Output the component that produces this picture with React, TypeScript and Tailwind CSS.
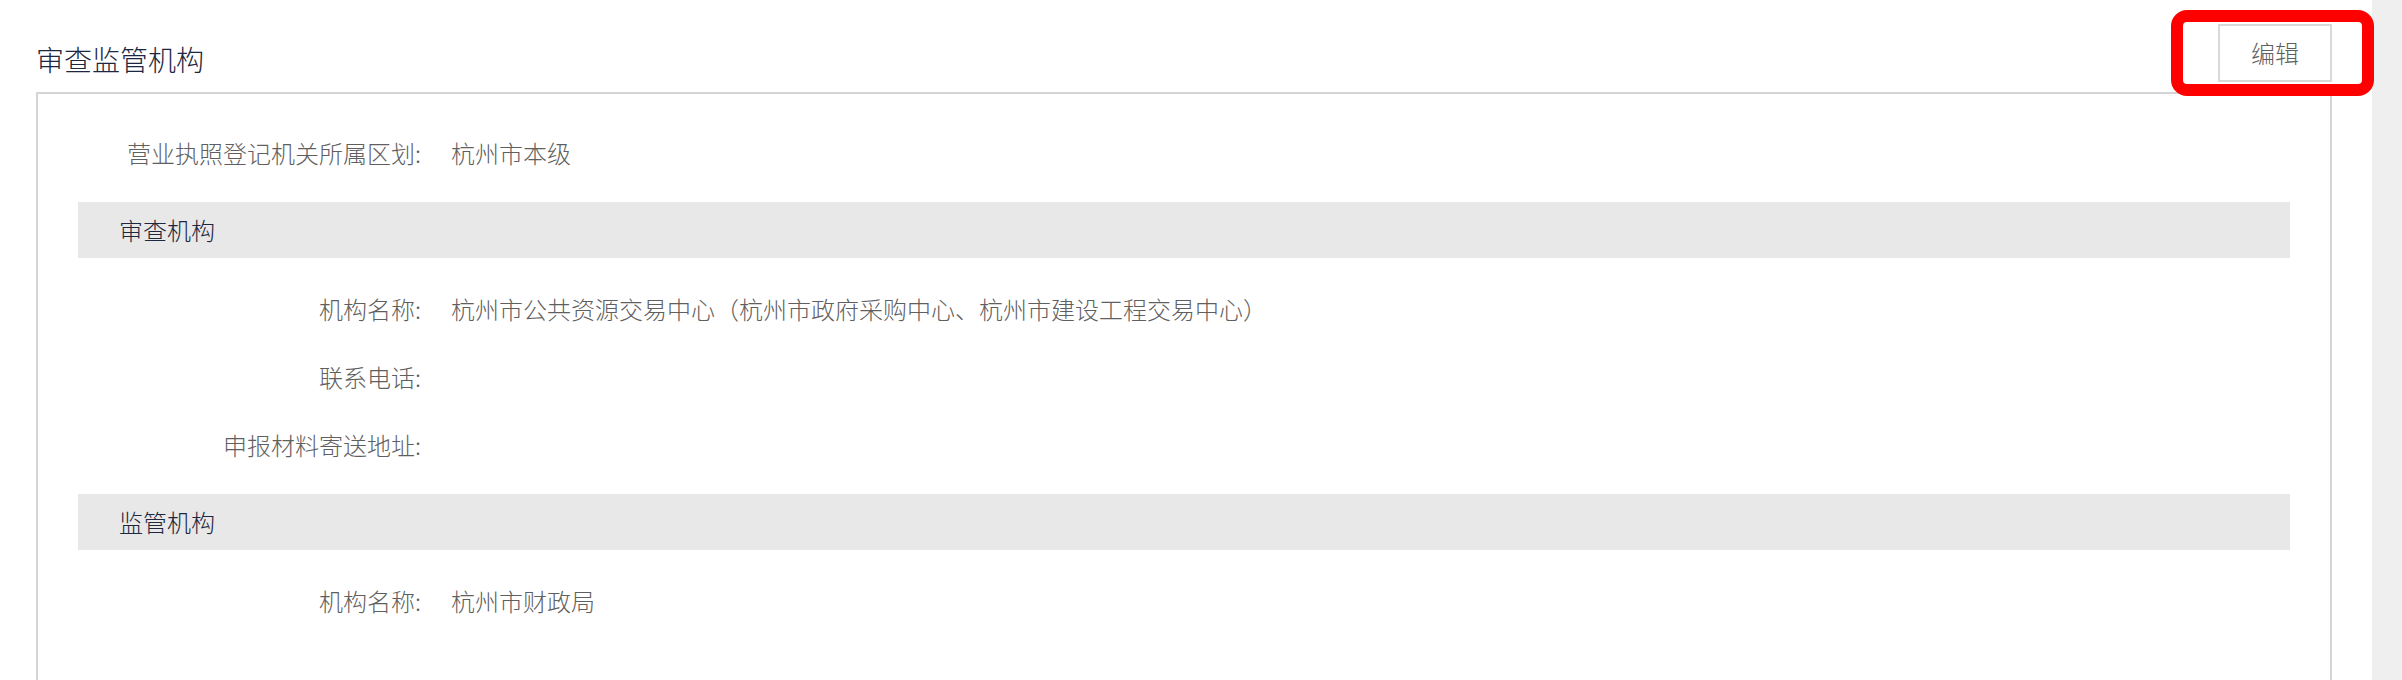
const reviewRows = [
  {
    label: "机构名称:",
    value: "杭州市公共资源交易中心（杭州市政府采购中心、杭州市建设工程交易中心）",
  },
  { label: "联系电话:", value: "" },
  { label: "申报材料寄送地址:", value: "" },
];

const superviseRows = [{ label: "机构名称:", value: "杭州市财政局" }];

function InfoRow({ label, value }: { label: string; value: string }) {
  return (
    <div className="flex h-[68px] items-center text-[24px] font-light text-[#5f5f5f]">
      <div className="w-[343px] shrink-0 text-right">{label}</div>
      <div className="pl-[30px]">{value}</div>
    </div>
  );
}

function SectionBar({ title }: { title: string }) {
  return (
    <div className="mt-[15px] mb-[17px] flex h-[56px] items-center bg-[#e8e8e8] pl-[41px] text-[24px] font-light text-[#1d2740]">
      {title}
    </div>
  );
}

export default function App() {
  return (
    <div className="flex h-[680px] w-[2402px] overflow-hidden bg-white font-['Noto_Sans_CJK_SC',sans-serif]">
      {/* Main content */}
      <div className="flex-1 pl-[36px] pr-[40px]">
        {/* Header */}
        <div className="flex h-[92px] items-start justify-between">
          <h2 className="mt-[38px] text-[28px] font-light leading-[42px] text-[#1d2740]">
            审查监管机构
          </h2>
          <div className="relative mt-[24px]">
            <button className="flex h-[58px] w-[114px] items-center justify-center border-2 border-[#d9d9d9] bg-white text-[24px] font-light text-[#5f5f5f]">
              编辑
            </button>
            {/* highlight */}
            <div className="absolute -top-[14px] -bottom-[14px] -left-[47px] -right-[42px] z-10 rounded-[16px] border-[12px] border-[#ff0000]" />
          </div>
        </div>

        {/* Panel */}
        <div className="border-2 border-[#d4d4d4] px-[40px] pt-[25px] pb-[60px]">
          <InfoRow label="营业执照登记机关所属区划:" value="杭州市本级" />

          <SectionBar title="审查机构" />
          {reviewRows.map((row) => (
            <InfoRow key={row.label} label={row.label} value={row.value} />
          ))}

          <SectionBar title="监管机构" />
          {superviseRows.map((row) => (
            <InfoRow key={row.label} label={row.label} value={row.value} />
          ))}
        </div>
      </div>

      {/* Right gutter */}
      <div className="h-full w-[30px] shrink-0 bg-[#efefef]" />
    </div>
  );
}
